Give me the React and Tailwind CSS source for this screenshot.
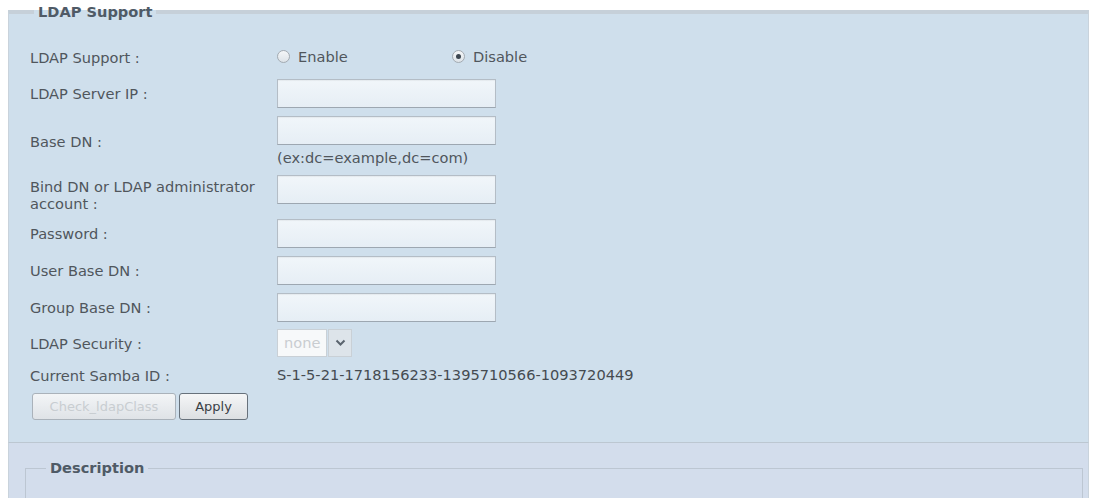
import React from "react";

const Radio = ({ checked, label }) => (
  <label className="flex items-center gap-[8px]">
    <span className="flex h-[13px] w-[13px] items-center justify-center rounded-full border border-[#a3aab1] bg-gradient-to-b from-[#f4f6f8] to-[#dde3e8]">
      {checked && <span className="h-[5px] w-[5px] rounded-full bg-[#3c4650]" />}
    </span>
    <span>{label}</span>
  </label>
);

const TextInput = () => (
  <div className="h-[29px] w-[219px] border border-[#b4bdc6] border-b-[#9da7b1] bg-gradient-to-b from-[#f1f6fa] to-[#e6eef5] shadow-[inset_0_1px_1px_rgba(0,0,0,0.05)]" />
);

const Row = ({ label, children, className = "", start = false }) => (
  <div className={`flex ${start ? "items-start" : "items-center"} ${className}`}>
    <div className={`w-[247px] shrink-0 leading-[17px] ${start ? "pt-[3px]" : ""}`}>{label}</div>
    <div>{children}</div>
  </div>
);

export default function App() {
  return (
    <div className="h-[498px] overflow-hidden bg-white pl-2 pr-[4px] font-['DejaVu_Sans',sans-serif] text-[14.6px] text-[#50565c]">
      <fieldset className="border-x border-b border-t-4 border-x-[#c9d3dc] border-b-[#bcc7d1] border-t-[#c6d0d9] bg-[#cfdfec] pl-[21px] pt-[21px] pb-[22px]">
        <legend className="ml-[4px] px-[4px] text-[14.6px] font-bold leading-[24px] text-[#4f5a66]">
          LDAP Support
        </legend>

        <Row label="LDAP Support :" className="h-[24px]">
          <div className="flex">
            <div className="w-[175px]">
              <Radio label="Enable" />
            </div>
            <Radio checked label="Disable" />
          </div>
        </Row>

        <Row label="LDAP Server IP :" className="mt-[10px]">
          <TextInput />
        </Row>

        <Row label="Base DN :" className="mt-[8px]">
          <TextInput />
          <div className="mt-[4px] leading-[17px]">(ex:dc=example,dc=com)</div>
        </Row>

        <Row label={<>Bind DN or LDAP administrator<br />account :</>} start className="mt-[9px]">
          <TextInput />
        </Row>

        <Row label="Password :" className="mt-[7px]">
          <TextInput />
        </Row>

        <Row label="User Base DN :" className="mt-[8px]">
          <TextInput />
        </Row>

        <Row label="Group Base DN :" className="mt-[8px]">
          <TextInput />
        </Row>

        <Row label="LDAP Security :" className="mt-[7px]">
          <div className="flex h-[28px]">
            <div className="flex w-[50px] items-center border border-[#c9d0d6] bg-[#f7f9fa] pl-[6px] text-[#c9cdd1]">
              none
            </div>
            <div className="ml-[1px] flex w-[24px] items-center justify-center border border-[#c9d0d6] bg-[#dde4ea]">
              <svg width="11" height="8" viewBox="0 0 11 8">
                <path d="M1.5 1.5 L5.5 5.5 L9.5 1.5" fill="none" stroke="#5a646e" strokeWidth="2" />
              </svg>
            </div>
          </div>
        </Row>

        <Row label="Current Samba ID :" className="mt-[9px] h-[18px]">
          <span className="text-[#454b51]">S-1-5-21-1718156233-1395710566-1093720449</span>
        </Row>

        <div className="mt-[9px] ml-[2px] flex gap-[3px]">
          <button className="h-[27px] w-[144px] rounded-[3px] border border-[#aab2ba] bg-gradient-to-b from-[#f3f5f7] to-[#dfe3e7] text-[13px] text-[#c8cdd1]">
            Check_ldapClass
          </button>
          <button className="h-[27px] w-[69px] rounded-[3px] border border-[#67717b] bg-gradient-to-b from-[#f5f6f7] to-[#dcdfe2] text-[13px] text-[#3a4046]">
            Apply
          </button>
        </div>
      </fieldset>

      <div className="h-full border-x border-x-[#c9d3dc] bg-[#d3ddec] pl-[16px] pr-[5px] pt-[15px]">
        <fieldset className="h-[200px] border border-[#bcc6d2] pl-4">
          <legend className="ml-[4px] px-[4px] text-[14.6px] font-bold leading-[20px] text-[#4f5a66]">
            Description
          </legend>
        </fieldset>
      </div>
    </div>
  );
}
